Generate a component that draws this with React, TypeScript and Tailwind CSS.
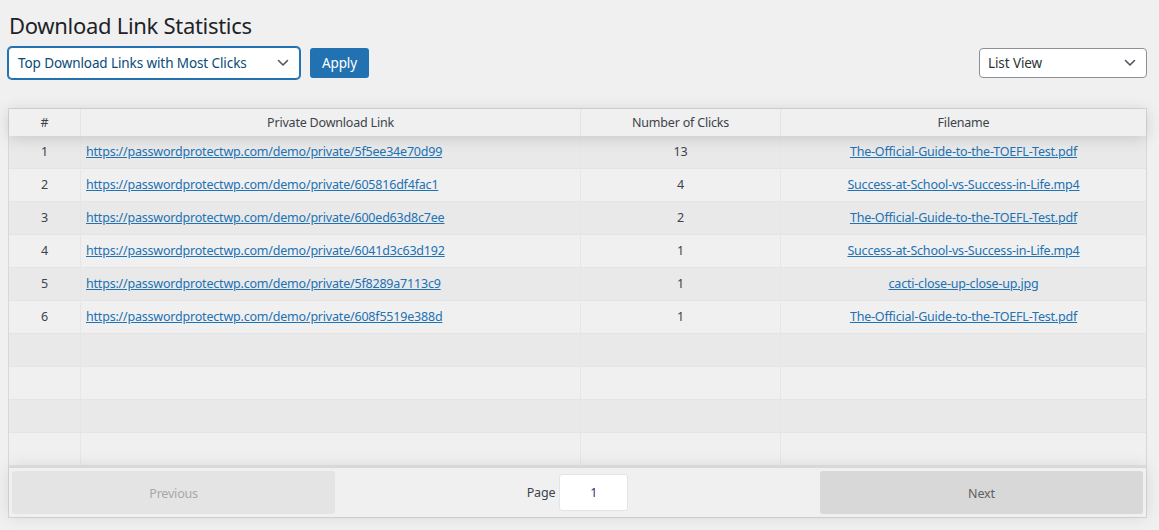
import React from "react";

const rows = [
  { n: 1, link: "https://passwordprotectwp.com/demo/private/5f5ee34e70d99", clicks: 13, file: "The-Official-Guide-to-the-TOEFL-Test.pdf" },
  { n: 2, link: "https://passwordprotectwp.com/demo/private/605816df4fac1", clicks: 4, file: "Success-at-School-vs-Success-in-Life.mp4" },
  { n: 3, link: "https://passwordprotectwp.com/demo/private/600ed63d8c7ee", clicks: 2, file: "The-Official-Guide-to-the-TOEFL-Test.pdf" },
  { n: 4, link: "https://passwordprotectwp.com/demo/private/6041d3c63d192", clicks: 1, file: "Success-at-School-vs-Success-in-Life.mp4" },
  { n: 5, link: "https://passwordprotectwp.com/demo/private/5f8289a7113c9", clicks: 1, file: "cacti-close-up-close-up.jpg" },
  { n: 6, link: "https://passwordprotectwp.com/demo/private/608f5519e388d", clicks: 1, file: "The-Official-Guide-to-the-TOEFL-Test.pdf" },
];

function Chevron() {
  return (
    <svg width="12" height="8" viewBox="0 0 12 8" fill="none">
      <path d="M1.5 1.5L6 6L10.5 1.5" stroke="#50575e" strokeWidth="1.6" strokeLinecap="round" strokeLinejoin="round" />
    </svg>
  );
}

export default function App() {
  const empty = [7, 8, 9, 10];
  return (
    <div
      className="h-[530px] w-[1159px] overflow-hidden bg-[#f0f0f1] pl-[8px] pr-[12px] text-[12.5px] tracking-[-0.2px] text-[#3c434a]"
      style={{ fontFamily: '"Noto Sans", "Open Sans", sans-serif' }}
    >
      <h1 className="pt-[10px] pl-[1px] text-[22px] leading-[30px] font-normal tracking-[-0.3px] text-[#1d2327]">Download Link Statistics</h1>

      <div className="mt-[7px] flex items-center">
        <div className="flex h-[32px] w-[292px] items-center justify-between rounded-[4px] border border-[#2271b1] bg-white pl-[9px] pr-[10px] text-[13.5px] tracking-[-0.1px] text-[#0a4b78] shadow-[0_0_0_1px_#2271b1]">
          <span>Top Download Links with Most Clicks</span>
          <Chevron />
        </div>
        <button className="ml-[10px] h-[30px] w-[59px] rounded-[3px] bg-[#2271b1] text-[13.5px] tracking-[-0.1px] text-white">Apply</button>
        <div className="ml-auto flex h-[30px] w-[168px] items-center justify-between rounded-[4px] border border-[#8c8f94] bg-white pl-[8px] pr-[10px] text-[13.5px] tracking-[-0.1px] text-[#2c3338]">
          <span>List View</span>
          <Chevron />
        </div>
      </div>

      <div className="mt-[29px] border border-[#d8d8d9]">
        {/* header */}
        <div className="relative z-10 flex h-[27px] items-center shadow-[0_2px_15px_0_rgba(0,0,0,0.15)]">
          <div className="flex h-full w-[72px] items-center justify-center border-r border-[#e4e4e5] pt-[1px]">#</div>
          <div className="flex h-full w-[500px] items-center justify-center border-r border-[#e4e4e5] pt-[1px]">Private Download Link</div>
          <div className="flex h-full w-[200px] items-center justify-center border-r border-[#e4e4e5] pt-[1px]">Number of Clicks</div>
          <div className="flex h-full flex-1 items-center justify-center pt-[1px]">Filename</div>
        </div>
        {/* body */}
        <div>
          {rows.map((r) => (
            <div
              key={r.n}
              className={`flex h-[33px] items-center border-b border-[#e4e4e5] pt-[1px] ${r.n % 2 === 1 ? "bg-[#e9e9ea]" : "bg-[#f0f0f1]"}`}
            >
              <div className="flex h-full w-[72px] items-center justify-center border-r border-[#e6e6e7]">{r.n}</div>
              <div className="flex h-full w-[500px] items-center border-r border-[#e6e6e7] px-[5px]">
                <a className="text-[#2271b1] underline">{r.link}</a>
              </div>
              <div className="flex h-full w-[200px] items-center justify-center border-r border-[#e6e6e7]">{r.clicks}</div>
              <div className="flex h-full flex-1 items-center justify-center">
                <a className="text-[#2271b1] underline">{r.file}</a>
              </div>
            </div>
          ))}
          {empty.map((n) => (
            <div
              key={n}
              className={`flex h-[33px] items-center border-b border-[#e4e4e5] ${n % 2 === 1 ? "bg-[#e9e9ea]" : "bg-[#f0f0f1]"}`}
            >
              <div className="h-full w-[72px] border-r border-[#e6e6e7]" />
              <div className="h-full w-[500px] border-r border-[#e6e6e7]" />
              <div className="h-full w-[200px] border-r border-[#e6e6e7]" />
              <div className="h-full flex-1" />
            </div>
          ))}
        </div>
        {/* pagination */}
        <div className="relative z-10 flex h-[51px] items-stretch border-t-2 border-[#d8d8d9] p-[3px] shadow-[0_0_15px_0_rgba(0,0,0,0.1)]">
          <div className="flex-[1]">
            <button className="h-full w-full rounded-[3px] bg-[#e4e4e5] pt-[3px] text-[#a8a8a8]">Previous</button>
          </div>
          <div className="flex flex-[1.5] items-center justify-center">
            <span className="mr-[4px] pt-[1px] text-[#3c434a]">Page</span>
            <div className="flex h-[37px] w-[69px] items-center justify-center rounded-[3px] border border-[#e4e4e5] bg-white pt-[1px] text-[#3c2a7a]">1</div>
          </div>
          <div className="flex-[1]">
            <button className="h-full w-full rounded-[3px] bg-[#d8d8d8] pt-[3px] text-[#5f5f5f]">Next</button>
          </div>
        </div>
      </div>
    </div>
  );
}
